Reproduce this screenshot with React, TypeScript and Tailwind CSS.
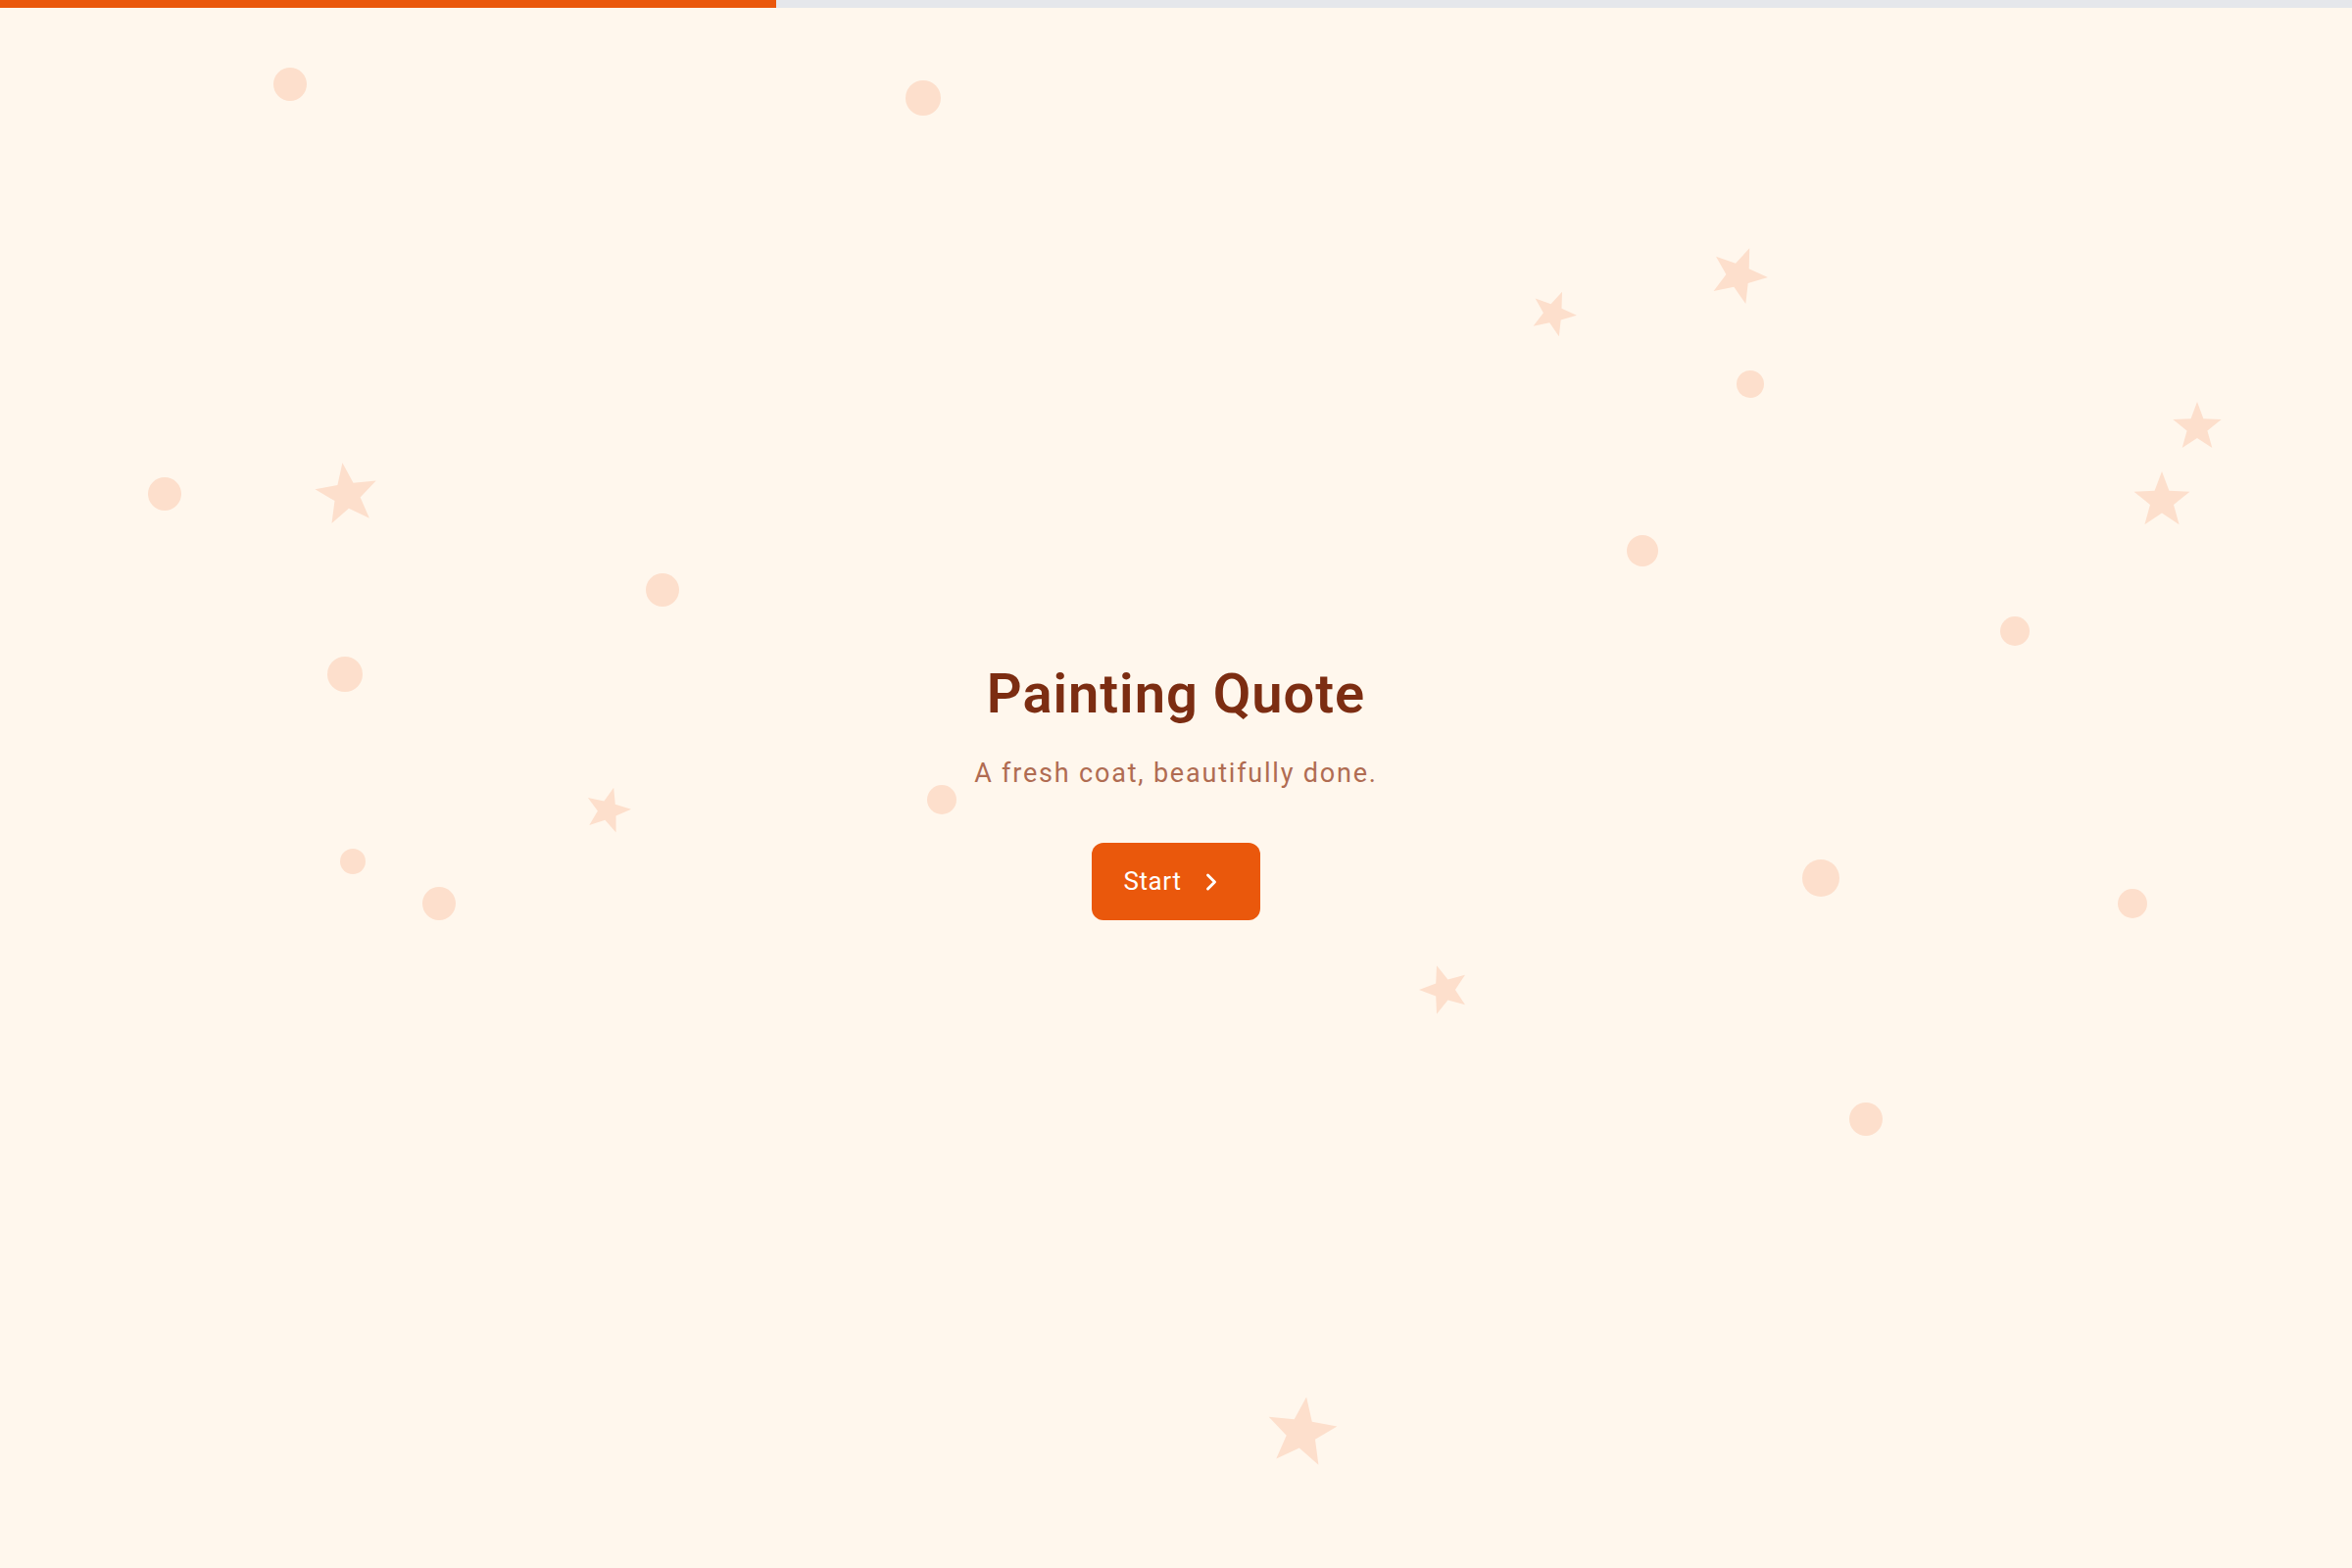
import React from "react";
import { ChevronRight } from "lucide-react";

const circles: [number, number, number][] = [
  [296, 86, 17],
  [942, 100, 18],
  [1786, 392, 14],
  [168, 504, 17],
  [676, 602, 17],
  [1676, 562, 16],
  [2056, 644, 15],
  [352, 688, 18],
  [961, 816, 15],
  [360, 879, 13],
  [448, 922, 17],
  [1858, 896, 19],
  [2176, 922, 15],
  [1904, 1142, 17],
];

const stars: [number, number, number, number][] = [
  [1585, 320, 24, 22],
  [1774, 281, 30, 22],
  [2242, 436, 26, 0],
  [2206, 511, 30, 0],
  [354, 505, 33, -8],
  [620, 827, 24, 15],
  [1474, 1010, 26, -18],
  [1328, 1462, 37, 8],
];

function starPoints(cx: number, cy: number, R: number, rot: number, ratio = 0.42) {
  const pts: string[] = [];
  for (let i = 0; i < 10; i++) {
    const r = i % 2 === 0 ? R : R * ratio;
    const a = ((-90 + rot + i * 36) * Math.PI) / 180;
    pts.push(`${(cx + r * Math.cos(a)).toFixed(1)},${(cy + r * Math.sin(a)).toFixed(1)}`);
  }
  return pts.join(" ");
}

export default function App() {
  return (
    <div
      className="relative h-screen w-full overflow-hidden bg-[#FFF7ED]"
      style={{ fontFamily: "Roboto, 'Noto Sans', sans-serif" }}
    >
      <svg
        className="absolute inset-0 h-full w-full"
        viewBox="0 0 2400 1600"
        preserveAspectRatio="none"
        aria-hidden="true"
      >
        {circles.map(([cx, cy, r], i) => (
          <circle key={`c${i}`} cx={cx} cy={cy} r={r} fill="#FDDFCC" />
        ))}
        {stars.map(([cx, cy, R, rot], i) => (
          <polygon key={`s${i}`} points={starPoints(cx, cy, R, rot)} fill="#FDDFCC" />
        ))}
      </svg>

      <div className="absolute left-0 right-0 top-0 h-2 bg-[#E5E7EB]">
        <div className="h-full w-[33%] bg-[#EA580C]" />
      </div>

      <div className="relative flex h-full flex-col items-center justify-center pt-[19px]">
        <h1 className="text-[56px] font-semibold leading-none tracking-[1px] text-[#7C2D12]">
          Painting Quote
        </h1>
        <p className="mt-10 text-[27px] leading-none tracking-[1.8px] text-[#B06C52]">
          A fresh coat, beautifully done.
        </p>
        <button
          type="button"
          className="mt-[57px] flex items-center gap-4 rounded-xl bg-[#EA580C] py-6 pl-8 pr-9 text-[26px] font-normal leading-[31px] tracking-[0.6px] text-white"
        >
          <span>Start</span>
          <ChevronRight size={28} strokeWidth={2.5} />
        </button>
      </div>
    </div>
  );
}
